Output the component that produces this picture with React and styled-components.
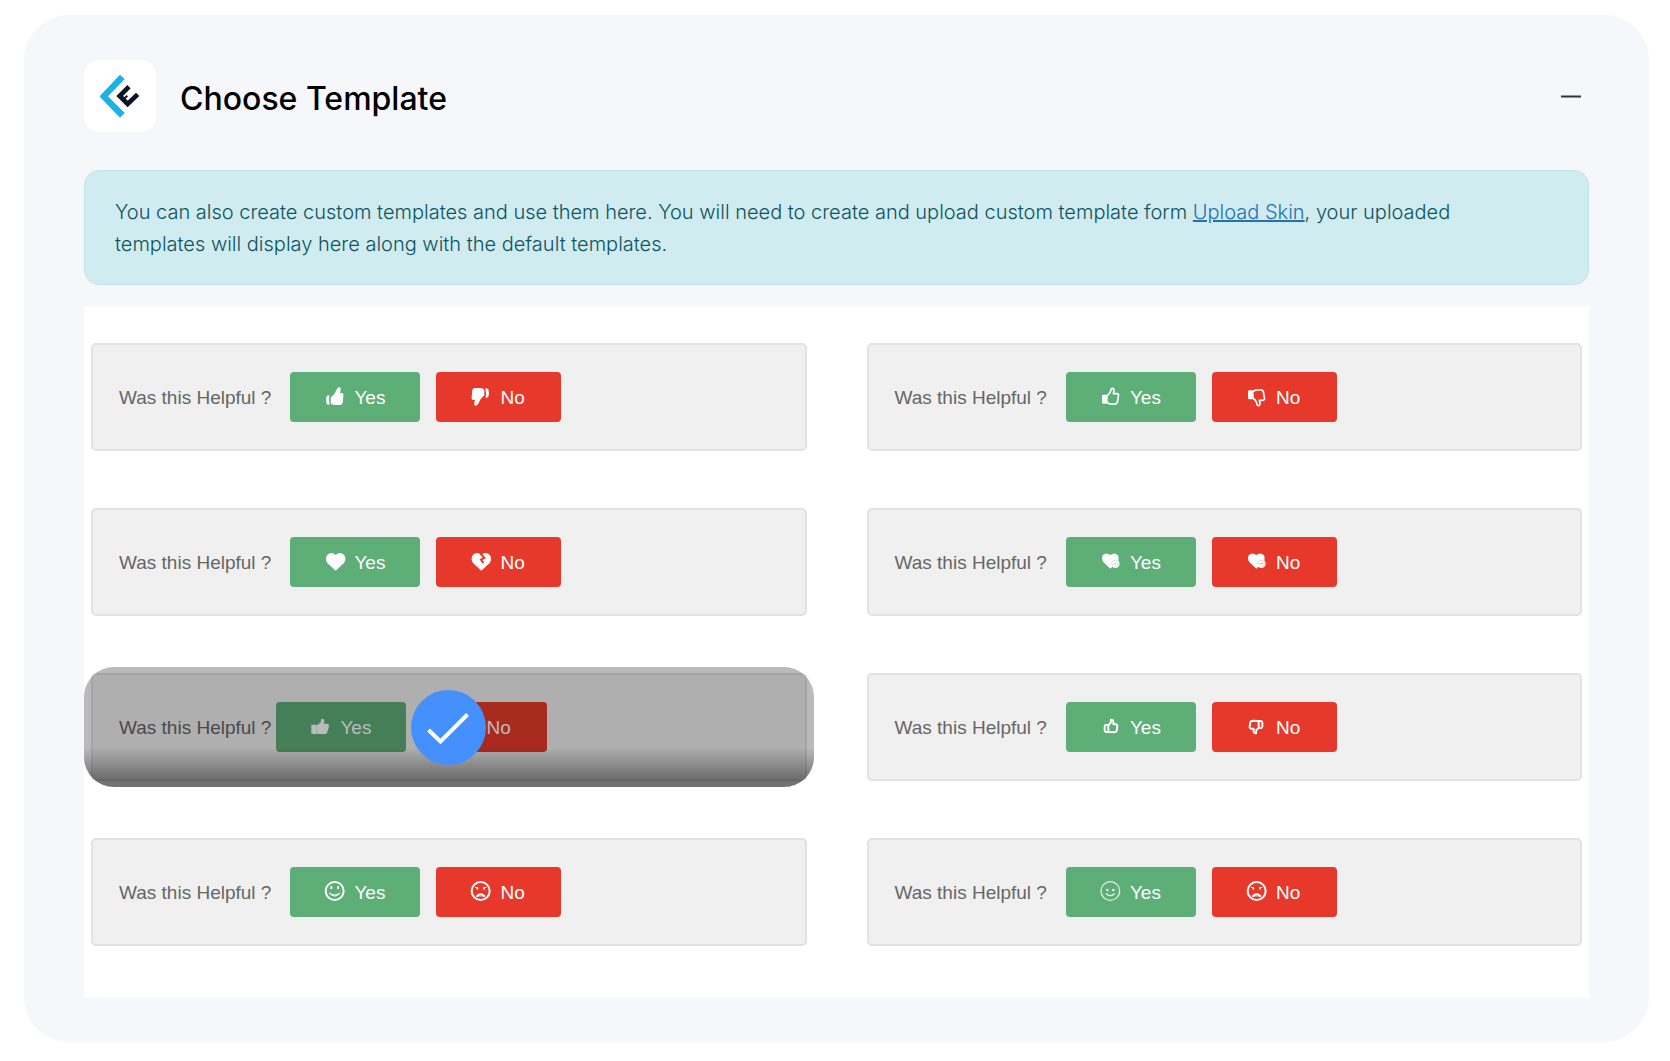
import React, { useState } from "react";
import styled, { createGlobalStyle } from "styled-components";

const GlobalStyle = createGlobalStyle`
  * {
    box-sizing: border-box;
  }
  body {
    margin: 0;
    background: #fff;
    font-family: Inter, "Liberation Sans", sans-serif;
  }
`;

const ThumbSolid = () => (
  <>
    <path d="M17 32 L28 21 L36 5 Q42 -2 47 3 Q48 10 45 18 L53 19 Q57 22 55 28 L53 48 Q51 54 45 54 L27 54 Q18 53 17 47 Z" />
    <path d="M13 24 Q-1 24 5 50 Q6 53 14 53 Q10 38 13 24 Z" />
  </>
);

const ThumbOutline = () => (
  <>
    <path
      d="M18 26 Q28 20 31 5 Q39 2 39 12 L37 20 L48 20 Q55 22 52 28 L49 46 Q47 52 40 51 L26 51 L17 46 Z"
      fill="none"
      stroke="currentColor"
      strokeWidth="5"
      strokeLinejoin="round"
    />
    <path d="M3 26 Q3 23 7 23 L17 23 L17 50 L7 50 Q3 50 3 46 Z" />
  </>
);

const ThumbBlock = () => (
  <>
    <path d="M1 23 L16 23 L16 52 L1 50 Z" />
    <path d="M16 25 L28 18 L31 6 Q39 3 40 12 L38 20 L50 20 Q55 22 54 27 L49 46 Q47 52 40 52 L16 50 Z" />
  </>
);

const ThumbSmall = () => (
  <g
    fill="none"
    stroke="currentColor"
    strokeWidth="6"
    strokeLinejoin="round"
  >
    <path d="M22 24 L29 18 L30 8 Q38 7 37 18 L37 22 L46 22 Q50 24 49 29 L47 41 Q45 46 40 46 L22 45 Z" />
    <path d="M22 24 L14 24 Q11 25 11 29 L11 40 Q11 44 15 45 L22 45" />
  </g>
);

const heartPath =
  "M30 55 L5 32 Q-3 21 4 9 Q17 -4 30 8 Q43 -4 56 9 Q63 21 55 32 Z";

const Heart = () => <path d={heartPath} transform="translate(2 1)" />;

const HeartBroken = () => (
  <g transform="translate(1 1)">
    <path d={heartPath} />
    <path
      d="M28 4 L39 17 L29 22 L36 32"
      fill="none"
      stroke="#e6392b"
      strokeWidth="6"
    />
  </g>
);

const HeartBadge = ({ minus }) => (
  <>
    <path d="M28 50 L6 29 Q0 18 6 9 Q16 0 28 9 Q40 0 50 9 Q56 18 50 29 Z" />
    <circle cx="43" cy="35" r="13" />
    <g fill="none" stroke={minus ? "#e6392b" : "#5eae78"} strokeOpacity="0.4">
      <path d="M33 39 A10 10 0 1 1 45 44" strokeWidth="2" />
      {minus ? (
        <path d="M38 35 L48 35" strokeWidth="4" />
      ) : (
        <path d="M40 35 L46 35 M43 32 L43 38" strokeWidth="4" />
      )}
    </g>
  </>
);

const FaceHappy = () => (
  <g fill="none" stroke="currentColor" strokeWidth="6" strokeLinecap="round">
    <circle cx="29" cy="27" r="27" />
    <path d="M19 15 L19 19 M39 15 L39 19" />
    <path d="M14 34 Q29 51 44 34 Q29 44 14 34" strokeWidth="3" />
  </g>
);

const FaceSad = () => (
  <g fill="none" stroke="currentColor" strokeWidth="6" strokeLinecap="round">
    <circle cx="29" cy="27" r="27" />
    <path d="M13 16 L20 17 M45 16 L38 17" strokeWidth="3" />
    <path d="M19 18 L19 21 M39 18 L39 21" strokeWidth="5" />
    <path d="M18 42 Q29 31 40 42" />
    <path d="M18 42 L40 42" strokeWidth="2" />
  </g>
);

const FaceThin = () => (
  <g opacity="0.8">
    <g fill="none" stroke="currentColor" strokeWidth="4" strokeLinecap="round">
      <circle cx="28" cy="27" r="28" />
      <path d="M16 35 Q28 47 40 35" />
    </g>
    <circle cx="19" cy="24" r="4" />
    <circle cx="37" cy="24" r="4" />
  </g>
);

const Turned = ({ children }) => (
  <g transform="translate(57 57) rotate(180)">{children}</g>
);

const Flipped = ({ children }) => (
  <g transform="translate(0 60) scale(1 -1)">{children}</g>
);

const templates = [
  {
    id: "template-1",
    yes: <ThumbSolid />,
    no: (
      <Turned>
        <ThumbSolid />
      </Turned>
    ),
  },
  {
    id: "template-2",
    yes: <ThumbOutline />,
    no: (
      <Flipped>
        <ThumbOutline />
      </Flipped>
    ),
  },
  { id: "template-3", yes: <Heart />, no: <HeartBroken /> },
  { id: "template-4", yes: <HeartBadge />, no: <HeartBadge minus /> },
  {
    id: "template-5",
    compact: true,
    yes: <ThumbBlock />,
    no: (
      <Flipped>
        <ThumbBlock />
      </Flipped>
    ),
  },
  {
    id: "template-6",
    yes: <ThumbSmall />,
    no: (
      <Turned>
        <ThumbSmall />
      </Turned>
    ),
  },
  { id: "template-7", yes: <FaceHappy />, no: <FaceSad /> },
  { id: "template-8", yes: <FaceThin />, no: <FaceSad /> },
];

function VoteIcon({ children }) {
  return (
    <IconSvg viewBox="0 0 60 60" aria-hidden="true">
      {children}
    </IconSvg>
  );
}

function Template({ template, selected, onSelect }) {
  const { id, yes, no, compact } = template;
  return (
    <Slot>
      <HiddenRadio
        type="radio"
        name="template"
        id={id}
        checked={selected}
        onChange={() => onSelect(id)}
      />
      <Card>
        <Question htmlFor={id} $compact={compact}>
          Was this Helpful ?
        </Question>
        <Votes>
          <VoteButton type="button" $color="#5eae78" $width="130px">
            <VoteIcon>{yes}</VoteIcon>
            Yes
          </VoteButton>
          <VoteButton type="button" $color="#e6392b" $width="125px">
            <VoteIcon>{no}</VoteIcon>
            No
          </VoteButton>
        </Votes>
      </Card>
      {selected && (
        <Overlay>
          <Tick viewBox="0 0 75 75" aria-hidden="true">
            <circle cx="37.5" cy="37.5" r="37.5" fill="#4590ff" />
            <path
              d="M17.5 40 L29.5 51.5 L56.5 24.5"
              fill="none"
              stroke="#fff"
              strokeWidth="4"
            />
          </Tick>
        </Overlay>
      )}
    </Slot>
  );
}

export default function App() {
  const [selected, setSelected] = useState("template-5");
  const [open, setOpen] = useState(true);

  return (
    <>
      <GlobalStyle />
      <Panel>
        <Header>
          <LogoBox>
            <svg width="40" height="44" viewBox="0 0 120 132" aria-hidden="true">
              <path
                d="M60 2 L74 16 L24 67 L74 117 L60 131 L-2 67 Z"
                fill="#1ab2e6"
              />
              <path
                d="M87 38 L59 66 L83 90 L113 61"
                fill="none"
                stroke="#0b1226"
                strokeWidth="14"
              />
              <path d="M70 76 L82 65" stroke="#0b1226" strokeWidth="6" />
            </svg>
          </LogoBox>
          <Title>Choose Template</Title>
          <Toggle
            type="button"
            aria-label="Toggle section"
            aria-expanded={open}
            onClick={() => setOpen(!open)}
          >
            <svg width="20" height="20" viewBox="0 0 20 20" aria-hidden="true">
              <path d="M0 10.5 L20 10.5" stroke="#333" strokeWidth="2" />
            </svg>
          </Toggle>
        </Header>
        {open && (
          <>
            <Notice>
              You can also create custom templates and use them here. You will
              need to create and upload custom template form{" "}
              <a href="#upload-skin">Upload Skin</a>, your uploaded templates
              will display here along with the default templates.
            </Notice>
            <TemplateGrid>
              {templates.map((template) => (
                <Template
                  key={template.id}
                  template={template}
                  selected={template.id === selected}
                  onSelect={setSelected}
                />
              ))}
            </TemplateGrid>
          </>
        )}
      </Panel>
    </>
  );
}

const Panel = styled.main`
  margin: 15px 21px 18px 24px;
  padding: 45px 60px 44px;
  border-radius: 45px;
  background: #f5f7fb;
`;

const Header = styled.header`
  display: flex;
  align-items: center;
  gap: 24px;
  padding-right: 8px;
`;

const LogoBox = styled.div`
  display: flex;
  align-items: center;
  justify-content: center;
  width: 72px;
  height: 72px;
  border-radius: 15px;
  background: #fff;
`;

const Title = styled.h2`
  margin: 0;
  padding-top: 6px;
  flex: 1;
  color: #000;
  font-size: 32px;
  line-height: 40px;
  font-weight: 500;
`;

const Toggle = styled.button`
  display: flex;
  padding: 0;
  border: 0;
  background: transparent;
  cursor: pointer;
`;

const Notice = styled.p`
  margin: 38px 0 21px;
  padding: 25px 60px 24px 30px;
  border: 1px solid #bee5eb;
  border-radius: 15px;
  background: #d1ecf1;
  color: #0c5460;
  font-size: 20px;
  line-height: 32px;
  font-weight: 300;
  a {
    color: #2271b1;
  }
`;

const TemplateGrid = styled.div`
  display: grid;
  grid-template-columns: 1fr 1fr;
  gap: 45px 46px;
  padding: 31px 0 46px;
  background: #fff;
`;

const Slot = styled.div`
  position: relative;
  height: 120px;
  padding: 6px 7px;
`;

const HiddenRadio = styled.input`
  position: absolute;
  opacity: 0;
  pointer-events: none;
`;

const Card = styled.div`
  display: flex;
  align-items: center;
  height: 108px;
  padding: 0 26px;
  border: 2px solid #e2e2e2;
  border-radius: 5px;
  background: #f0f0f0;
  font-family: "Liberation Sans", Arial, sans-serif;
  font-size: 19px;
`;

const Question = styled.label`
  padding-top: 2px;
  margin-right: ${({ $compact }) => ($compact ? "5px" : "19px")};
  color: #666;
  white-space: nowrap;
  cursor: pointer;
`;

const Votes = styled.div`
  display: flex;
  gap: 16px;
`;

const VoteButton = styled.button`
  display: flex;
  align-items: center;
  gap: 9px;
  width: ${({ $width }) => $width};
  height: 50px;
  padding: 2px 0 0 35px;
  border: 0;
  border-radius: 4px;
  background: ${({ $color }) => $color};
  color: #fff;
  font: inherit;
  cursor: pointer;
`;

const IconSvg = styled.svg`
  width: 20px;
  height: 20px;
  margin-bottom: 2px;
  overflow: visible;
  fill: currentColor;
`;

const Overlay = styled.div`
  position: absolute;
  inset: 0;
  display: flex;
  align-items: center;
  justify-content: center;
  border-radius: 30px;
  background: linear-gradient(
    rgba(0, 0, 0, 0.27) 67%,
    rgba(0, 0, 0, 0.55) 94%
  );
  pointer-events: none;
`;

const Tick = styled.svg`
  width: 75px;
  height: 75px;
`;
